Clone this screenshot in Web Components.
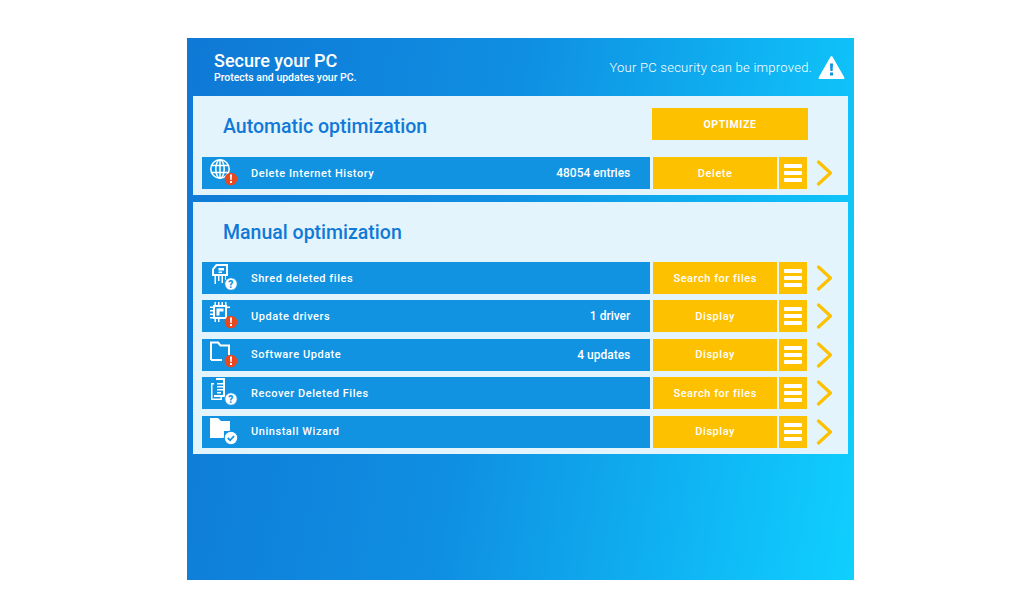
<!DOCTYPE html>
<html>
<head>
<meta charset="utf-8">
<title>Secure your PC</title>
<style>
	html, body { margin: 0; background: #fff; }
	body { padding: 38px 0 0 187px; font-family: Roboto, "Liberation Sans", sans-serif; }
</style>
</head>
<body>
<pc-window>
	<opt-panel title="Automatic optimization" button="OPTIMIZE" style="--head: 61px">
		<opt-row label="Delete Internet History" info="48054 entries" action="Delete" icon="globe" badge="warn"></opt-row>
	</opt-panel>
	<opt-panel title="Manual optimization" style="--head: 60px">
		<opt-row label="Shred deleted files" action="Search for files" icon="shred" badge="help"></opt-row>
		<opt-row label="Update drivers" info="1 driver" action="Display" icon="chip" badge="warn"></opt-row>
		<opt-row label="Software Update" info="4 updates" action="Display" icon="folder" badge="warn"></opt-row>
		<opt-row label="Recover Deleted Files" action="Search for files" icon="doc" badge="help"></opt-row>
		<opt-row label="Uninstall Wizard" action="Display" icon="folderfill" badge="ok"></opt-row>
	</opt-panel>
</pc-window>
<script>
const ICONS = {
	globe: `<g fill="none" stroke="#fff" stroke-width="1.5"><circle cx="11" cy="11" r="9.2"/><ellipse cx="11" cy="11" rx="4.2" ry="9.2"/><path d="M11 2v18M2.4 7.6h17.2M2.4 14.4h17.2"/></g>`,
	shred: `<path fill="#fff" fill-rule="evenodd" d="M7 1h12v12h-2v4h-1v-4h-2v7h-1.500v-7h-2v5H9v-5H7v8H5.500v-8H3V6zM8 3 5 6.500V11h12V3zM9.500 5H15v2.500H9.500zM9.500 8.500H13V10H9.500z"/>`,
	chip: `<g fill="#fff"><path fill-rule="evenodd" d="M4 4h14v14H4zM6 6v10h10V6z"/><path d="M7.500 7.500h7v3h-4v4h-3zM5.500 1h1.500v3H5.500zM9 1h1.500v3H9zM12.500 1H14v3h-1.500zM16 1h1.500v3H16zM1 5.500h3V7H1zM1 9h3v1.500H1zM1 12.500h3V14H1zM1 16h3v1.500H1zM18 5.500h3V7h-3zM5.500 18H7v3H5.500zM9 18h1.500v3H9z"/></g>`,
	folder: `<path fill="none" stroke="#fff" stroke-width="2" d="M2 20V2.500h7l2.500 3H20V15M2 20h11"/>`,
	doc: `<path fill="#fff" fill-rule="evenodd" d="M7 0h9v19H13v3H2V5h3v12h9V2H7zM3.500 6.500V20.500h8V19H5V6.500zM8 5h6v1.500H8zM8 8h6v1.500H8zM8 11h6v1.500H8zM8 14h4v1.500H8z"/>`,
	folderfill: `<path fill="#fff" d="M1 1h8l3 3h9v10h-6v7H1z"/>`
};
const BADGES = {
	warn: `<circle cx="22" cy="21" r="6.300" fill="#e8471f"/><path fill="#fff" d="M21 16.500h2l-.3 5.500h-1.400zM21 23h2v2h-2z"/>`,
	help: `<circle cx="22" cy="21" r="6.300" fill="#fff" stroke="#1193e2" stroke-width="1"/><text x="22" y="24.500" text-anchor="middle" font-family="Roboto, sans-serif" font-weight="900" font-size="10" fill="#1193e2">?</text>`,
	ok: `<circle cx="22" cy="21" r="6.800" fill="#fff" stroke="#1193e2" stroke-width="1.200"/><path fill="none" stroke="#1193e2" stroke-width="1.800" d="M18.800 21l2.300 2.300 4-4.300"/>`
};

class PcWindow extends HTMLElement {
	constructor() {
		super();
		this.attachShadow({mode: "open"});
		this.shadowRoot.innerHTML = `
		<style>
			:host {
				display: block;
				box-sizing: border-box;
				width: 667px;
				height: 542px;
				padding: 0 6px;
				color: #fff;
				background: linear-gradient(100deg, #0f79d6 0%, #0f8fe2 45%, #0fd0ff 100%);
			}
			header {
				display: flex;
				align-items: center;
				justify-content: space-between;
				height: 58px;
				box-sizing: border-box;
				padding: 0 3px 0 21px;
			}
			h1 {
				margin: 0;
				font-size: 18px;
				line-height: 20px;
				font-weight: 500;
			}
			p {
				margin: 0;
				font-size: 10.500px;
				line-height: 13px;
				font-weight: 500;
			}
			.status {
				display: flex;
				align-items: center;
				gap: 6px;
				font-size: 13px;
				font-weight: 300;
				letter-spacing: .25px;
			}
			.stack { display: flex; flex-direction: column; gap: 7px; }
		</style>
		<header>
			<div>
				<h1>Secure your PC</h1>
				<p>Protects and updates your PC.</p>
			</div>
			<div class="status">
				<span>Your PC security can be improved.</span>
				<svg width="27" height="25" viewBox="0 0 27 25"><path fill="#fff" stroke="#fff" stroke-width="2" stroke-linejoin="round" d="M13.500 2 1.500 23h24z"/><path fill="#1193e2" d="M12 8.500h3l-.4 7.500h-2.200zM12 17.500h3v3h-3z"/></svg>
			</div>
		</header>
		<div class="stack"><slot></slot></div>
		`;
	}
}

class OptPanel extends HTMLElement {
	constructor() {
		super();
		this.attachShadow({mode: "open"});
		const button = this.getAttribute("button");
		this.shadowRoot.innerHTML = `
		<style>
			:host {
				display: block;
				box-sizing: border-box;
				padding: 0 14px 6px 9px;
				background: #e3f4fd;
			}
			.head {
				display: flex;
				align-items: center;
				justify-content: space-between;
				height: var(--head, 60px);
				padding-left: 21px;
			}
			h2 {
				margin: 0;
				color: #1079d8;
				font-size: 19.500px;
				font-weight: 500;
			}
			button {
				all: unset;
				display: grid;
				place-items: center;
				width: 156px;
				height: 32px;
				background: #fdc100;
				color: #fff;
				font-size: 10.500px;
				font-weight: 700;
				letter-spacing: .6px;
				margin-right: 26px;
				margin-top: -5px;
			}
			.rows { display: flex; flex-direction: column; gap: 6.400px; }
		</style>
		<div class="head">
			<h2>${this.getAttribute("title")}</h2>
			${button ? `<button>${button}</button>` : ""}
		</div>
		<div class="rows"><slot></slot></div>
		`;
	}
}

class OptRow extends HTMLElement {
	constructor() {
		super();
		this.attachShadow({mode: "open"});
		const info = this.getAttribute("info");
		this.shadowRoot.innerHTML = `
		<style>
			:host {
				display: flex;
				height: 32px;
				font-size: 11px;
				font-weight: 500;
				letter-spacing: .55px;
				color: #fff;
			}
			.main {
				display: flex;
				align-items: center;
				box-sizing: border-box;
				width: 449px;
				padding: 0 20px 0 7px;
				background: #1193e2;
			}
			svg.icon { flex: none; }
			.label { margin-left: 12px; flex: 1; }
			.info { font-size: 12px; letter-spacing: 0; }
			.action {
				display: grid;
				place-items: center;
				width: 124px;
				margin-left: 3px;
				background: #fdc100;
			}
			.menu {
				display: flex;
				flex-direction: column;
				justify-content: center;
				gap: 3px;
				box-sizing: border-box;
				width: 28px;
				margin-left: 2px;
				padding: 0 5px;
				background: #fdc100;
			}
			.menu i { display: block; height: 4px; border-radius: 1px; background: #fff; }
			.arrow { margin-left: 9px; align-self: center; }
		</style>
		<div class="main">
			<svg class="icon" width="30" height="30" viewBox="0 0 30 30">${ICONS[this.getAttribute("icon")]}${BADGES[this.getAttribute("badge")]}</svg>
			<span class="label">${this.getAttribute("label")}</span>
			${info ? `<span class="info">${info}</span>` : ""}
		</div>
		<div class="action">${this.getAttribute("action")}</div>
		<div class="menu"><i></i><i></i><i></i></div>
		<svg class="arrow" width="18" height="26" viewBox="0 0 18 26"><path fill="none" stroke="#fdc100" stroke-width="3.200" stroke-linecap="round" stroke-linejoin="round" d="M2.500 2 14.500 13 2.500 24"/></svg>
		`;
	}
}

window.customElements.define("pc-window", PcWindow);
window.customElements.define("opt-panel", OptPanel);
window.customElements.define("opt-row", OptRow);
</script>
</body>
</html>
